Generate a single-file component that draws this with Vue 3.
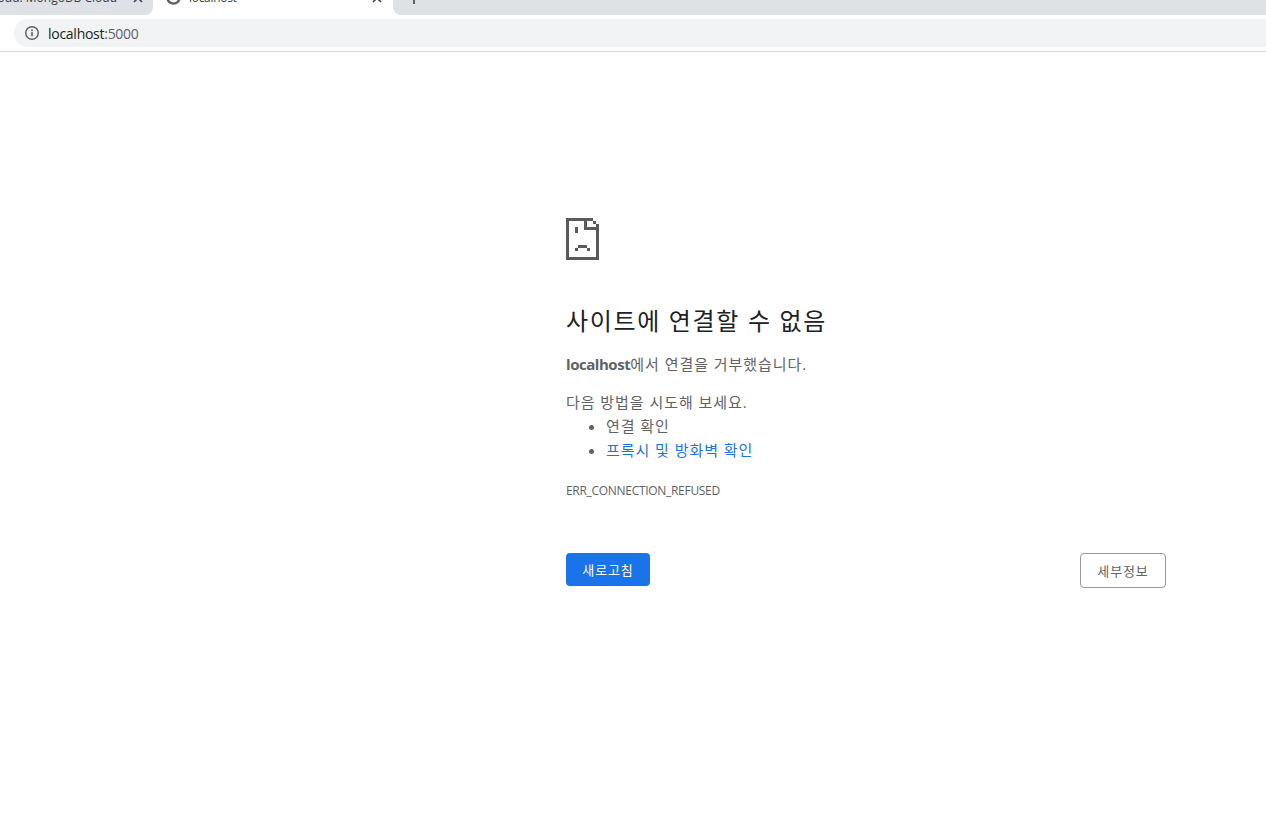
<template>
  <div class="page">
    <div class="tabstrip">
      <div class="tab-side tab-left">
        <span class="tab-title">Cloud: MongoDB Cloud</span>
        <svg class="tab-close" width="10" height="10" viewBox="0 0 10 10">
          <path d="M1 1l8 8M9 1l-8 8" stroke="#45494f" stroke-width="1.6" fill="none" />
        </svg>
      </div>
      <div class="tab-active">
        <svg class="tab-globe" width="15" height="15" viewBox="0 0 16 16">
          <circle cx="8" cy="8" r="6.5" fill="none" stroke="#5f6368" stroke-width="2.6" />
          <path d="M3 4l5 3-2 3-3-1z" fill="#5f6368" />
        </svg>
        <span class="tab-title">localhost</span>
        <svg class="tab-close" width="10" height="10" viewBox="0 0 10 10">
          <path d="M1 1l8 8M9 1l-8 8" stroke="#45494f" stroke-width="1.6" fill="none" />
        </svg>
      </div>
      <div class="tab-side tab-right">
        <span class="tab-plus"></span>
      </div>
    </div>

    <div class="toolbar">
      <div class="omnibox">
        <svg width="16" height="16" viewBox="0 0 16 16">
          <circle cx="8" cy="8" r="6.3" fill="none" stroke="#5f6368" stroke-width="1.5" />
          <rect x="7.2" y="7" width="1.6" height="4.4" fill="#5f6368" />
          <rect x="7.2" y="4.5" width="1.6" height="1.6" fill="#5f6368" />
        </svg>
        <span class="url">localhost<span class="port">:5000</span></span>
      </div>
    </div>

    <main class="error-page">
      <div class="error-box">
        <svg class="error-icon" width="33" height="42" viewBox="0 0 11 14" shape-rendering="crispEdges">
          <rect v-for="(p, i) in iconPixels" :key="i" :x="p[0]" :y="p[1]" :width="p[2]" :height="p[3]" fill="#5a5a5a" />
        </svg>
        <h1>사이트에 연결할 수 없음</h1>
        <p class="summary"><strong>localhost</strong>에서 연결을 거부했습니다.</p>
        <div class="suggestions">
          <p>다음 방법을 시도해 보세요.</p>
          <ul>
            <li>연결 확인</li>
            <li><a href="#">프록시 및 방화벽 확인</a></li>
          </ul>
        </div>
        <div class="error-code">ERR_CONNECTION_REFUSED</div>
        <div class="buttons">
          <button class="reload">새로고침</button>
          <button class="details">세부정보</button>
        </div>
      </div>
    </main>
  </div>
</template>

<script setup>
// sad file icon on an 11x14 pixel grid: x, y, w, h
const iconPixels = [
  [0, 0, 9, 1],
  [0, 0, 1, 14],
  [0, 13, 11, 1],
  [10, 2, 1, 12],
  [9, 1, 1, 1],
  [6, 0, 1, 4],
  [6, 3, 5, 1],
  [3, 3, 1, 2],
  [4, 9, 3, 1],
  [3, 10, 1, 1],
  [7, 10, 1, 1]
]
</script>

<style>
body {
  background: #fff;
  overflow: hidden;
}
</style>

<style scoped>
.page {
  height: 817px;
  overflow: hidden;
  font-family: "Open Sans", "Noto Sans CJK KR", sans-serif;
  color: #5f6368;
}

.tabstrip {
  display: flex;
  height: 15px;
  overflow: hidden;
  background: #fff;
}

.tab-side {
  display: flex;
  align-items: flex-end;
  background: #dee1e6;
}

.tab-left {
  width: 153px;
  flex: none;
  justify-content: flex-end;
  padding-right: 10px;
  box-sizing: border-box;
  border-bottom-right-radius: 8px;
}

.tab-right {
  flex: 1;
  border-bottom-left-radius: 8px;
}

.tab-active {
  width: 240px;
  flex: none;
  display: flex;
  align-items: flex-end;
  box-sizing: border-box;
  padding: 0 11px 0 13px;
}

.tab-title {
  font-size: 12px;
  line-height: 16px;
  margin-bottom: 9px;
  color: #3c4043;
  white-space: nowrap;
}

.tab-left .tab-title {
  margin-right: 16px;
}

.tab-active .tab-title {
  flex: 1;
  margin-left: 8px;
  letter-spacing: -0.3px;
}

.tab-close {
  flex: none;
  margin-bottom: 12px;
}

.tab-globe {
  flex: none;
  margin-bottom: 10px;
}

.tab-plus {
  width: 2px;
  height: 5px;
  margin: 0 0 11px 20px;
  background: #5f6368;
}

.toolbar {
  height: 37px;
  box-sizing: border-box;
  padding: 4px 0 4px 14px;
  border-bottom: 1px solid #d9d9d9;
  background: #fff;
}

.omnibox {
  height: 28px;
  margin-right: -20px;
  padding-left: 10px;
  display: flex;
  align-items: center;
  gap: 8px;
  border-radius: 14px;
  background: #f1f3f4;
}

.url {
  font-size: 14px;
  letter-spacing: -0.27px;
  color: #202124;
}

.port {
  color: #5f6368;
}

.error-page {
  padding: 166px 0 0 566px;
}

.error-box {
  width: 600px;
}

.error-icon {
  display: block;
}

h1 {
  margin: 43px 0 0;
  font-size: 24px;
  line-height: 36px;
  font-weight: 400;
  letter-spacing: 1.65px;
  color: #202124;
}

.summary {
  margin: 13px 0 0;
  font-size: 15px;
  line-height: 24px;
  letter-spacing: 0.95px;
}

strong {
  letter-spacing: -0.45px;
}

.suggestions {
  margin-top: 14px;
  font-size: 15px;
  line-height: 24px;
  letter-spacing: 0.95px;
}

.suggestions p {
  margin: 0;
}

ul {
  margin: 0;
  padding-left: 40px;
}

a {
  color: #1a73e8;
  text-decoration: none;
}

.error-code {
  margin-top: 17px;
  font-size: 12px;
  line-height: 24px;
  letter-spacing: -0.3px;
}

.buttons {
  margin-top: 50px;
  display: flex;
  justify-content: space-between;
  align-items: flex-start;
}

button {
  font-family: inherit;
  font-size: 13px;
  letter-spacing: 0.9px;
  border-radius: 4px;
  padding: 0;
}

.reload {
  width: 84px;
  height: 33px;
  border: none;
  background: #1a73e8;
  color: #fff;
}

.details {
  width: 86px;
  height: 35px;
  border: 1px solid #9a9a9f;
  background: #fff;
  color: #5f6368;
}
</style>
